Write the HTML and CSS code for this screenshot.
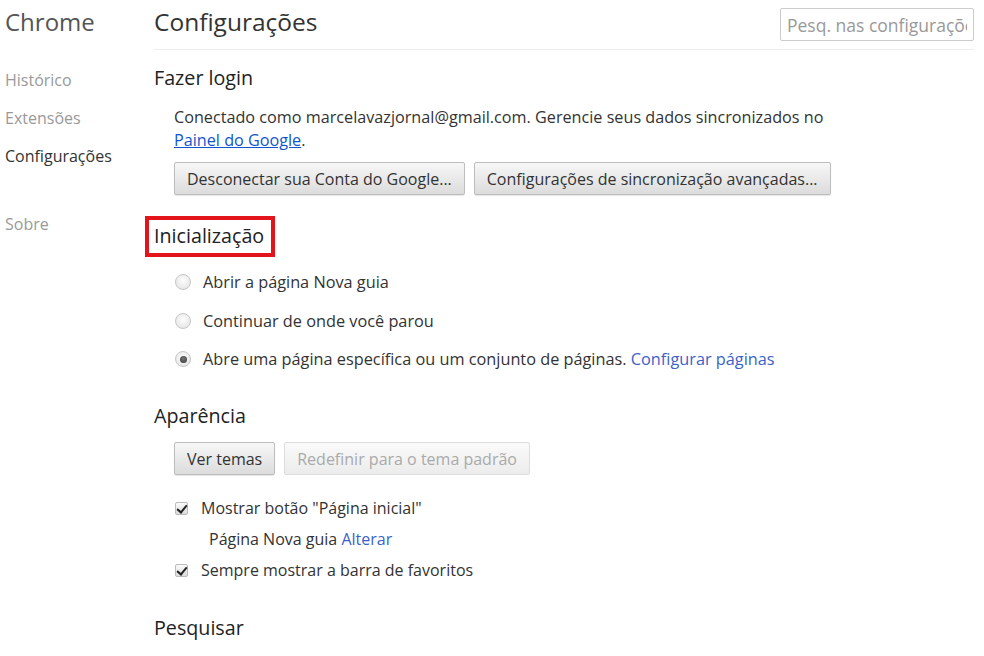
FILE: index.html
```html
<!DOCTYPE html>
<html lang="pt-BR">
<head>
  <meta charset="UTF-8">
  <title>Configurações</title>
  <link rel="stylesheet" href="styles.css">
</head>
<body>
  <div class="page">
    <!-- Left navigation -->
    <div class="sidebar">
      <h1 class="brand">Chrome</h1>
      <ul class="nav">
        <li>Histórico</li>
        <li>Extensões</li>
        <li class="active">Configurações</li>
        <li class="about">Sobre</li>
      </ul>
    </div>

    <!-- Settings content -->
    <div class="main">
      <div class="header">
        <h1 class="title">Configurações</h1>
        <input type="text" class="search" placeholder="Pesq. nas configurações">
      </div>

      <div class="section login">
        <h3>Fazer login</h3>
        <div class="indent">
          <p class="sync-text">Conectado como marcelavazjornal@gmail.com. Gerencie seus dados sincronizados no <a href="#" class="dash-link">Painel do Google</a>.</p>
          <div class="btn-row">
            <button class="btn">Desconectar sua Conta do Google...</button>
            <button class="btn">Configurações de sincronização avançadas...</button>
          </div>
        </div>
      </div>

      <div class="section startup">
        <h3><span class="highlight">Inicialização</span></h3>
        <div class="indent">
          <label class="radio-row"><span class="radio"></span>Abrir a página Nova guia</label>
          <label class="radio-row"><span class="radio"></span>Continuar de onde você parou</label>
          <label class="radio-row"><span class="radio checked"></span>Abre uma página específica ou um conjunto de páginas. <a href="#" class="link">Configurar páginas</a></label>
        </div>
      </div>

      <div class="section appearance">
        <h3>Aparência</h3>
        <div class="indent">
          <div class="btn-row">
            <button class="btn">Ver temas</button>
            <button class="btn disabled">Redefinir para o tema padrão</button>
          </div>
          <label class="check-row first"><span class="checkbox"></span>Mostrar botão "Página inicial"</label>
          <div class="sub-row">Página Nova guia <a href="#" class="link">Alterar</a></div>
          <label class="check-row"><span class="checkbox"></span>Sempre mostrar a barra de favoritos</label>
        </div>
      </div>

      <div class="section search-section">
        <h3>Pesquisar</h3>
      </div>
    </div>
  </div>
</body>
</html>
```

FILE: styles.css
```css
body {
  margin: 0;
  background: #fff;
  font-family: "Open Sans", "Noto Sans", Arial, sans-serif;
  color: #333;
  overflow: hidden;
}
.page {
  display: flex;
  height: 656px;
}
.sidebar {
  width: 154px;
  box-sizing: border-box;
  flex-shrink: 0;
  padding-left: 5px;
}
.brand {
  margin: 0;
  padding-top: 5px;
  font-size: 24px;
  font-weight: normal;
  line-height: 34px;
  color: #555;
}
.nav {
  list-style: none;
  margin: 30px 0 0;
  padding: 0;
}
.nav li {
  font-size: 16px;
  line-height: 22px;
  color: #999;
  margin-bottom: 16px;
}
.nav li.active {
  color: #333;
}
.nav li.about {
  margin-top: 46px;
}
.main {
  flex: 1;
  padding-right: 10px;
}
.header {
  display: flex;
  justify-content: space-between;
  align-items: flex-start;
  height: 49px;
  border-bottom: 1px solid #eee;
}
.title {
  margin: 0;
  font-size: 24.5px;
  font-weight: normal;
  color: #333;
  line-height: 34px;
  padding-top: 5px;
}
.search {
  width: 194px;
  height: 33px;
  box-sizing: border-box;
  margin-top: 8px;
  border: 1px solid #ccc;
  border-radius: 2px;
  padding: 0 6px;
  font-family: inherit;
  font-size: 17.5px;
}
.search::placeholder {
  color: #999;
}
.section h3 {
  margin: 0;
  font-size: 19.7px;
  font-weight: normal;
  color: #222;
  line-height: 26px;
}
.login h3 {
  margin-top: 15px;
}
.indent {
  padding-left: 20px;
}
.sync-text {
  margin: 15px 0 0;
  max-width: 680px;
  font-size: 16.2px;
  line-height: 23px;
  color: #333;
}
.dash-link {
  color: #15c;
}
.link {
  color: #3c62c8;
  text-decoration: none;
}
.btn-row {
  display: flex;
  gap: 9px;
  margin-top: 10px;
}
.btn {
  height: 33px;
  padding: 0 12px;
  font-family: inherit;
  font-size: 16px;
  color: #333;
  background: linear-gradient(#f7f7f7, #dcdcdc);
  border: 1px solid #bdbdbd;
  border-radius: 2px;
  box-shadow: 0 1px 1px rgba(0, 0, 0, 0.1);
}
.btn.disabled {
  color: #aaa;
  background: linear-gradient(#fafafa, #ececec);
  border-color: #ddd;
  box-shadow: none;
}
.startup h3 {
  margin-top: 21px;
  line-height: 40px;
}
.highlight {
  display: inline-block;
  vertical-align: top;
  margin-left: -9px;
  padding: 3px 7px 4px 5px;
  border: 4px solid #e3141b;
  line-height: 26px;
}
.radio-row, .check-row, .sub-row {
  display: block;
  font-size: 16px;
  color: #333;
  line-height: 22px;
}
.radio-row {
  margin-top: 16.5px;
  font-size: 16.3px;
}
.startup .radio-row:first-child {
  margin-top: 14px;
}
.radio {
  display: inline-block;
  vertical-align: -2px;
  width: 16px;
  height: 16px;
  box-sizing: border-box;
  border-radius: 50%;
  border: 1px solid #c6c6c6;
  background: radial-gradient(circle at 50% 40%, #fdfdfd, #e0e0e0);
  margin-left: 1px;
  margin-right: 12px;
  position: relative;
}
.radio.checked::after {
  content: "";
  position: absolute;
  left: 3.5px;
  top: 3.5px;
  width: 7px;
  height: 7px;
  border-radius: 50%;
  background: radial-gradient(circle at 50% 40%, #777, #333);
}
.appearance h3 {
  margin-top: 33px;
}
.appearance .btn-row {
  margin-top: 13px;
}
.check-row {
  margin-top: 9px;
}
.check-row.first {
  margin-top: 22px;
}
.checkbox {
  display: inline-block;
  vertical-align: -1px;
  width: 13px;
  height: 13px;
  box-sizing: border-box;
  border: 1px solid #bbb;
  border-radius: 2px;
  background: linear-gradient(#fbfbfb, #dcdcdc);
  margin-left: 1px;
  margin-right: 13px;
  position: relative;
}
.checkbox::after {
  content: "";
  position: absolute;
  left: 3px;
  top: 0;
  width: 4px;
  height: 8px;
  border: solid #222;
  border-width: 0 2px 2px 0;
  transform: rotate(40deg);
}
.sub-row {
  padding-left: 35px;
  margin-top: 9px;
}
.search-section h3 {
  margin-top: 34px;
}
```
